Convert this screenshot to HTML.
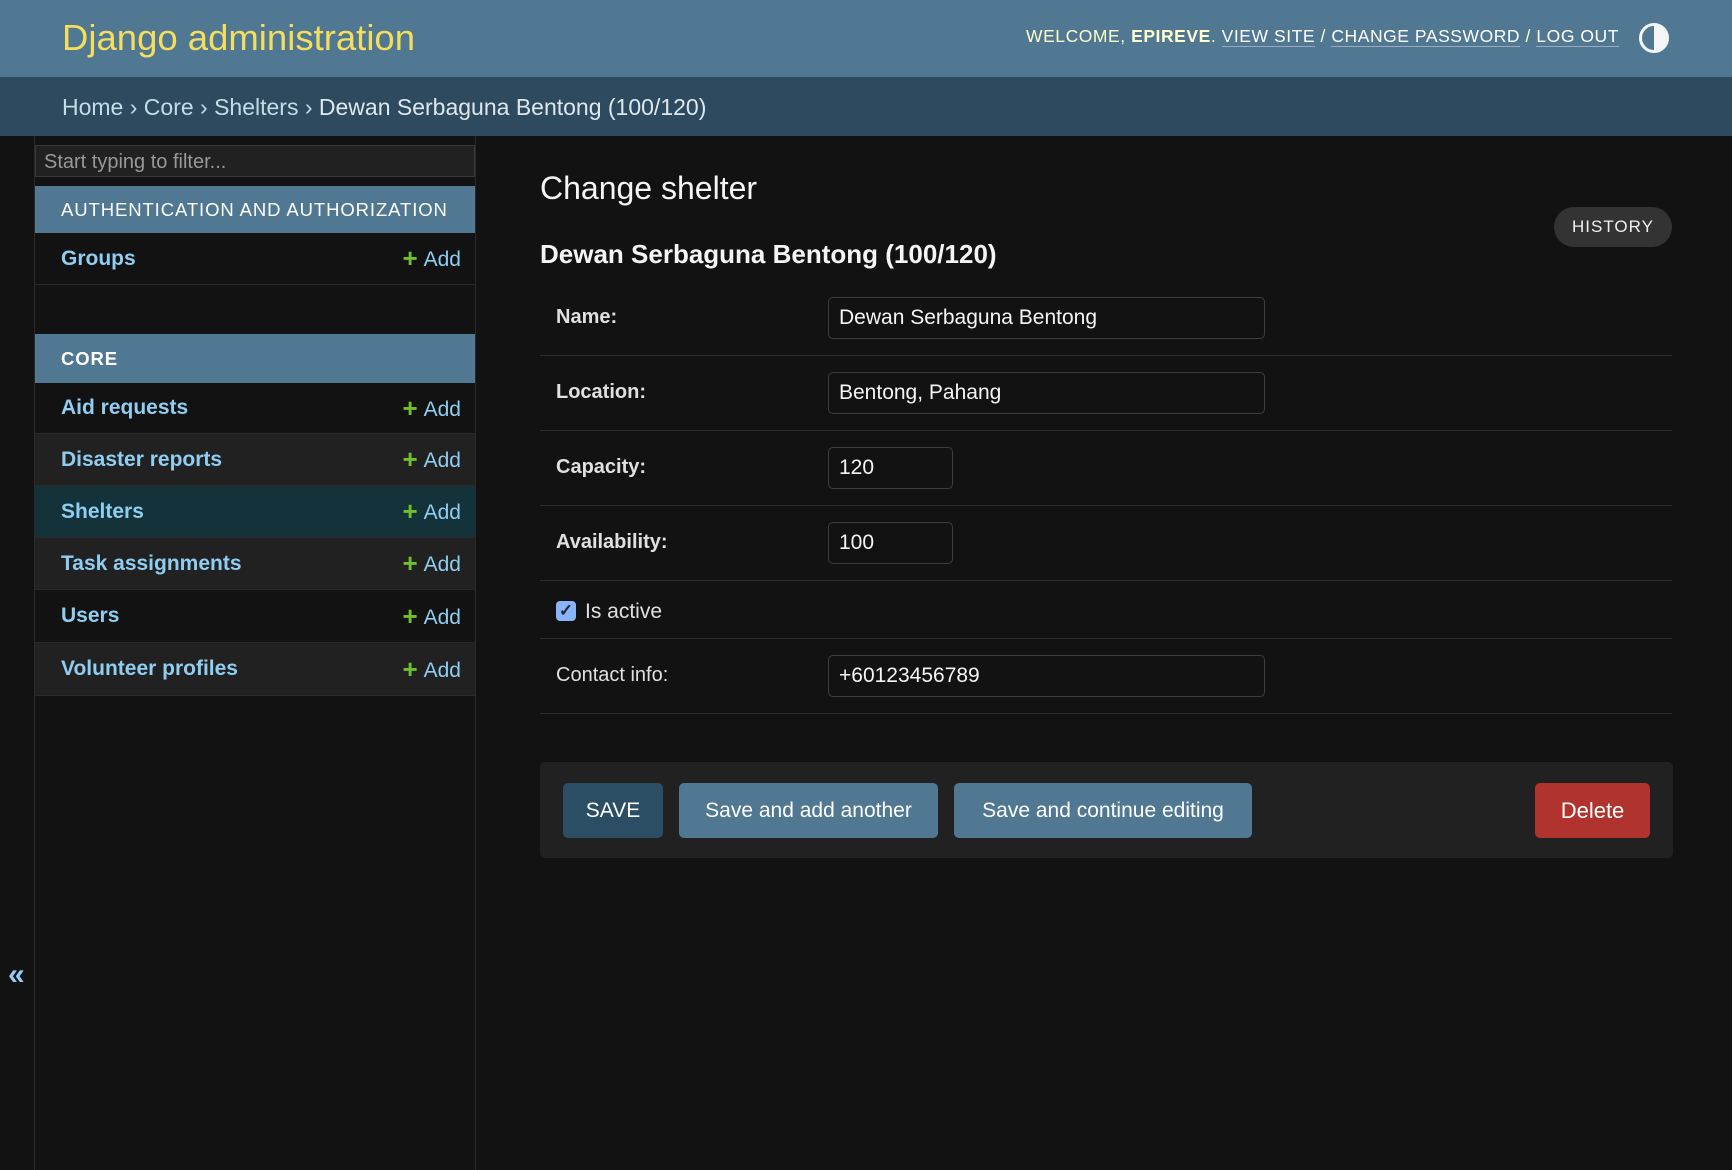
<!DOCTYPE html>
<html><head><meta charset="utf-8">
<style>
*{box-sizing:border-box;margin:0;padding:0}
body{width:1732px;height:1170px;background:#121212;font-family:"Liberation Sans",sans-serif;color:#f5f5f5;position:relative;overflow:hidden}
.a{position:absolute;white-space:nowrap}
#hdr{left:0;top:0;width:1732px;height:77px;background:#507892}
#bc{left:0;top:77px;width:1732px;height:59px;background:#2e4a5e}
.side{left:34px;top:136px;width:442px;height:1034px;border-left:1px solid #2a2a2a;border-right:1px solid #2a2a2a}
.cap{background:#507892;color:#fff;font-size:18.5px;letter-spacing:0.9px;padding-left:26px;display:flex;align-items:center}
.row{left:35px;width:440px;height:52px;border-bottom:1px solid #2a2a2a;display:flex;align-items:center;justify-content:space-between;padding:0 14px 0 26px;font-size:21px}
.row b{color:#8fcdf1;font-weight:bold}
.row span{color:#8fcdf1}
.row span i{color:#70bf2b;font-style:normal;font-weight:bold;margin-right:6px;font-size:26px;vertical-align:-1px}
.lbl{left:556px;font-size:20px;font-weight:bold;color:#e0e0e0}
.inp{left:828px;height:42px;border:1px solid #3d3d3d;border-radius:5px;background:#121212;font-size:21px;color:#f5f5f5;padding-left:10px;display:flex;align-items:center}
.ln{left:540px;width:1132px;height:1px;background:#2c2c2c}
.btn{top:783px;height:55px;border-radius:5px;display:flex;align-items:center;justify-content:center;font-size:21px;color:#fff}
</style></head><body>
<div class="a" id="hdr"></div>
<div class="a" style="left:62px;top:17px;font-size:36.5px;color:#f5dd5d">Django administration</div>
<div class="a" style="left:1026px;top:26px;font-size:17.5px;letter-spacing:0.55px;color:#ffffcc">WELCOME, <b>EPIREVE</b>. <span style="color:#fff;border-bottom:1px solid #9ab">VIEW SITE</span> / <span style="color:#fff;border-bottom:1px solid #9ab">CHANGE PASSWORD</span> / <span style="color:#fff;border-bottom:1px solid #9ab">LOG OUT</span></div>
<svg class="a" style="left:1638px;top:22px" width="32" height="32" viewBox="0 0 32 32"><circle cx="16" cy="16" r="13.5" fill="none" stroke="#f5f5f5" stroke-width="3"/><path d="M16 3 A13 13 0 0 1 16 29 Z" fill="#f5f5f5"/></svg>
<div class="a" id="bc"></div>
<div class="a" style="left:62px;top:94px;font-size:23px;color:#c4dce8">Home › Core › Shelters › <span style="color:#dde8ee">Dewan Serbaguna Bentong (100/120)</span></div>

<div class="a side"></div>
<div class="a" style="left:35px;top:145px;width:440px;height:32px;background:#212121;border:1px solid #3a3a3a;font-size:20px;color:#999;padding:5px 8px">Start typing to filter...</div>
<div class="a cap" style="left:35px;top:186px;width:440px;height:47px">AUTHENTICATION AND AUTHORIZATION</div>
<div class="a row" style="top:233px"><b>Groups</b><span><i>+</i>Add</span></div>
<div class="a cap" style="left:35px;top:334px;width:440px;height:49px;font-weight:bold">CORE</div>
<div class="a row" style="top:383px;height:51px"><b>Aid requests</b><span><i>+</i>Add</span></div>
<div class="a row" style="top:434px;background:#212121"><b>Disaster reports</b><span><i>+</i>Add</span></div>
<div class="a row" style="top:486px;background:#143239"><b>Shelters</b><span><i>+</i>Add</span></div>
<div class="a row" style="top:538px;background:#212121"><b>Task assignments</b><span><i>+</i>Add</span></div>
<div class="a row" style="top:590px;height:53px"><b>Users</b><span><i>+</i>Add</span></div>
<div class="a row" style="top:643px;background:#212121;height:53px"><b>Volunteer profiles</b><span><i>+</i>Add</span></div>
<div class="a" style="left:8px;top:958px;font-size:30px;color:#8fcdf1;font-weight:bold">«</div>

<div class="a" style="left:540px;top:170px;font-size:32px;color:#f5f5f5">Change shelter</div>
<div class="a" style="left:1554px;top:207px;width:118px;height:40px;border-radius:20px;background:#333;color:#f0f0f0;font-size:17px;letter-spacing:1px;display:flex;align-items:center;justify-content:center">HISTORY</div>
<div class="a" style="left:540px;top:239px;font-size:26px;font-weight:bold;color:#f5f5f5">Dewan Serbaguna Bentong (100/120)</div>

<div class="a lbl" style="top:306px">Name:</div>
<div class="a inp" style="top:297px;width:437px">Dewan Serbaguna Bentong</div>
<div class="a ln" style="top:355px"></div>
<div class="a lbl" style="top:381px">Location:</div>
<div class="a inp" style="top:372px;width:437px">Bentong, Pahang</div>
<div class="a ln" style="top:430px"></div>
<div class="a lbl" style="top:456px">Capacity:</div>
<div class="a inp" style="top:447px;width:125px">120</div>
<div class="a ln" style="top:505px"></div>
<div class="a lbl" style="top:531px">Availability:</div>
<div class="a inp" style="top:522px;width:125px">100</div>
<div class="a ln" style="top:580px"></div>
<div class="a" style="left:556px;top:601px;width:20px;height:20px;border-radius:4px;background:#8ab4f8;color:#1a2a3a;font-size:17px;font-weight:bold;text-align:center;line-height:20px">✓</div>
<div class="a" style="left:585px;top:600px;font-size:21px;color:#e0e0e0">Is active</div>
<div class="a ln" style="top:638px"></div>
<div class="a" style="left:556px;top:664px;font-size:20px;color:#e0e0e0">Contact info:</div>
<div class="a inp" style="top:655px;width:437px">+60123456789</div>
<div class="a ln" style="top:713px"></div>

<div class="a" style="left:540px;top:762px;width:1133px;height:96px;background:#212121;border-radius:5px"></div>
<div class="a btn" style="left:563px;width:100px;background:#2b4e64">SAVE</div>
<div class="a btn" style="left:679px;width:259px;background:#507892">Save and add another</div>
<div class="a btn" style="left:954px;width:298px;background:#507892">Save and continue editing</div>
<div class="a btn" style="left:1535px;width:115px;background:#b0332e;font-size:22px">Delete</div>
</body></html>
